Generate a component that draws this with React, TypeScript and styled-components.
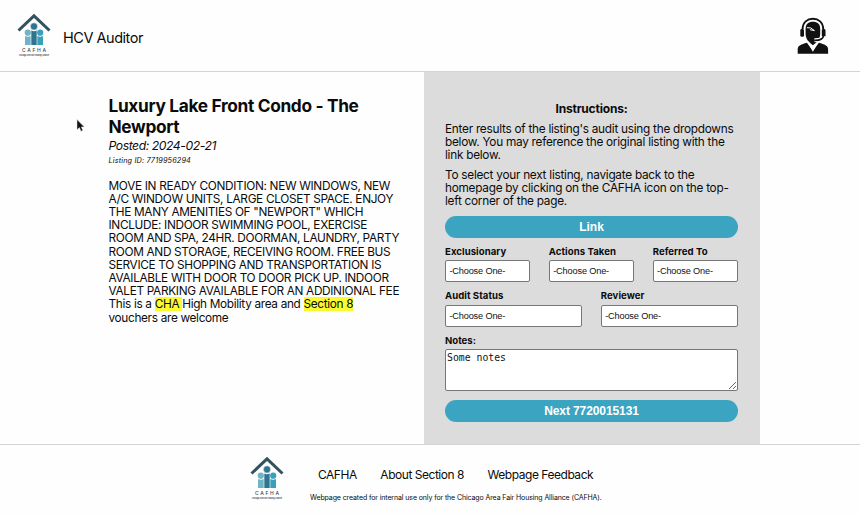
import React from "react";
import styled, { createGlobalStyle } from "styled-components";

const GlobalStyle = createGlobalStyle`
  * { box-sizing: border-box; }
  body { margin: 0; background: #fefefe; color: #0b0b0b; font-family: Inter, "Liberation Sans", sans-serif; }
  p, h1, h2, h3 { margin: 0; }
`;

const Page = styled.div`
  display: flex;
  flex-direction: column;
  height: 515px;
  width: 860px;
  overflow: hidden;
`;

const Header = styled.header`
  display: flex;
  align-items: flex-start;
  justify-content: space-between;
  height: 72.4px;
  padding: 13px 30px 0 17px;
  border-bottom: 1px solid #d4d4d4;
`;

const Brand = styled.div`
  display: flex;
  gap: 12px;
`;

const BrandName = styled.span`
  font-size: 14.5px;
  line-height: 20px;
  margin-top: 15px;
  letter-spacing: -0.48px;
`;

const AgentSvg = styled.svg`
  display: block;
  margin-top: 4px;
`;

const LogoSvg = styled.svg`
  display: block;
  flex: none;
  overflow: visible;
`;

const Main = styled.main`
  display: flex;
  height: 371.6px;
  padding-left: 108.5px;
`;

const Listing = styled.article`
  width: 315px;
  padding-top: 22.8px;
  white-space: nowrap;
`;

const Title = styled.h1`
  font-size: 17.3px;
  line-height: 21px;
  font-weight: 700;
  letter-spacing: -0.33px;
`;

const Posted = styled.p`
  font-size: 12.2px;
  font-style: italic;
  line-height: 16px;
  margin-top: 1px;
  letter-spacing: -0.44px;
`;

const ListingId = styled.p`
  font-size: 7.3px;
  font-style: italic;
  line-height: 10px;
  margin-top: 2px;
  letter-spacing: 0.15px;
`;

const Description = styled.p`
  font-size: 11.8px;
  line-height: 13.2px;
  margin-top: 13.4px;
  letter-spacing: -0.32px;
`;

const Mark = styled.mark`
  background: #fafa32;
  color: inherit;
`;

const Pointer = styled.svg`
  position: absolute;
  left: 75px;
  top: 118px;
`;

const Panel = styled.section`
  width: 336.5px;
  background: #dcdcdc;
  padding: 28.6px 22px 0 21.5px;
`;

const PanelTitle = styled.h2`
  font-size: 12px;
  line-height: 15px;
  text-align: center;
  letter-spacing: -0.2px;
`;

const Instruction = styled.p`
  font-size: 11.8px;
  line-height: 13.2px;
  margin-top: 6.7px;
  white-space: nowrap;
  letter-spacing: -0.26px;
`;

const PillButton = styled.button`
  display: block;
  width: 100%;
  height: 22px;
  padding: 0;
  border: 0;
  border-radius: 11px;
  background: #3ba4c1;
  color: #fff;
  font: 700 12px/22px "Liberation Sans", Arial, sans-serif;
  letter-spacing: -0.1px;
`;

const LinkButton = styled(PillButton)`
  margin-top: 7px;
  letter-spacing: 0;
`;

const Fields = styled.div<{ $top: number }>`
  display: flex;
  gap: 18.5px;
  margin-top: ${(p) => p.$top}px;
`;

const Field = styled.label`
  flex: 1;
  font-size: 9.6px;
  line-height: 12px;
  font-weight: 700;
  letter-spacing: 0.05px;
`;

const Select = styled.select`
  display: block;
  appearance: none;
  width: 100%;
  height: 22px;
  margin-top: 2.5px;
  padding: 0 3.4px;
  border: 1px solid #777;
  border-radius: 2px;
  background: #fff;
  color: #111;
  font: 9.2px "Liberation Sans", Arial, sans-serif;
  letter-spacing: -0.16px;
`;

const NotesField = styled.label`
  display: block;
  margin-top: 8px;
  font-size: 9.6px;
  line-height: 12px;
  font-weight: 700;
`;

const Notes = styled.textarea`
  display: block;
  width: 100%;
  height: 41.5px;
  margin: 2.5px 0 9px;
  padding: 1px;
  border: 1px solid #777;
  border-radius: 2px;
  background: #fff;
  color: #111;
  font: 9.8px/13px "DejaVu Sans Mono", monospace;
`;

const Footer = styled.footer`
  display: flex;
  gap: 26px;
  height: 71px;
  padding: 11px 0 0 250px;
  border-top: 1px solid #d4d4d4;
`;

const FooterBody = styled.div`
  padding-top: 10px;
`;

const FooterNav = styled.nav`
  display: flex;
  gap: 23.6px;
  padding-left: 8px;
  font-size: 12px;
  line-height: 18px;
  white-space: nowrap;
  letter-spacing: -0.47px;
`;

const Credit = styled.p`
  margin-top: 9px;
  font-size: 7px;
  line-height: 9px;
  white-space: nowrap;
  letter-spacing: -0.11px;
`;

function Logo() {
  return (
    <LogoSvg width="34" height="45" viewBox="0 0 34 45">
      <path d="M1.500 17.500 17 2.800 32.500 17.500" fill="none" stroke="#31535f" strokeWidth="3" />
      <g fill="#6fb3c6">
        <circle cx="10.800" cy="19.700" r="3.100" />
        <path d="M8 23q2.800 1.400 5.700 0V32H8z" />
      </g>
      <g fill="#39a0bb">
        <circle cx="23.200" cy="19.700" r="3.100" />
        <path d="M20.300 23q2.900 1.400 5.700 0V32h-5.700z" />
      </g>
      <path d="M14.300 17.500q2.700 1.500 5.400 0V32h-5.400z" fill="#2f7590" />
      <circle cx="17" cy="13.400" r="3.600" fill="#2f7590" stroke="#fefefe" strokeWidth=".5" />
      <text x="5" y="39" textLength="24" fontSize="5" fontWeight="500" fill="#3c4a50" fontFamily="Inter, sans-serif">CAFHA</text>
      <text x="2" y="42.500" textLength="30" lengthAdjust="spacingAndGlyphs" fontSize="2.200" fontWeight="600" fill="#333" fontFamily="Inter, sans-serif">Chicago Area Fair Housing Alliance</text>
    </LogoSvg>
  );
}

function AgentIcon() {
  return (
    <AgentSvg width="34" height="38" viewBox="0 0 34 38">
      <g transform="translate(.4 -.3)">
        <path d="M6.200 12.500C6.200 5.500 11 2 16.500 2S26.800 5.500 26.800 12.500" fill="none" stroke="#111" strokeWidth="1.900" />
        <rect x="3.900" y="12.300" width="3.700" height="7.800" rx="1.400" fill="#111" />
        <rect x="25.400" y="12.300" width="3.700" height="7.800" rx="1.400" fill="#111" />
        <path d="M9.200 12C9.200 7.500 12 5 16.500 5S23.800 7.500 23.800 12V17C23.800 22 20.500 26.500 16.500 26.500S9.200 22 9.200 17z" fill="#111" />
        <path d="M10.500 11 14.200 11.200 18 13.900 13.500 13" fill="none" stroke="#fff" strokeWidth="1" />
        <path d="M26.600 19.500C26.300 23.500 23 23.600 18 23.600" fill="none" stroke="#fff" strokeWidth="4" />
        <path d="M27 19.500C26.500 23 23.500 23.700 18.500 23.700" fill="none" stroke="#111" strokeWidth="1.700" strokeLinecap="round" />
        <path d="M1.300 37V32.500C1.300 28.500 5 27.700 10.500 26L16.500 34 22.500 26C28 27.700 31.700 28.500 31.700 32.500V37z" fill="#111" />
        <path d="M11.500 26.300 16.500 29.300 21.500 26.300 16.500 35z" fill="#fff" />
        <path d="M12.800 25.500h7.400l-3.700 3z" fill="#111" />
      </g>
    </AgentSvg>
  );
}

function Choice({ label }: { label: string }) {
  return (
    <Field>
      {label}
      <Select>
        <option>-Choose One-</option>
      </Select>
    </Field>
  );
}

export default function App() {
  return (
    <Page>
      <GlobalStyle />
      <Header>
        <Brand>
          <Logo />
          <BrandName>HCV Auditor</BrandName>
        </Brand>
        <AgentIcon />
      </Header>
      <Main>
        <Listing>
          <Title>Luxury Lake Front Condo - The<br />Newport</Title>
          <Posted>Posted: 2024-02-21</Posted>
          <ListingId>Listing ID: 7719956294</ListingId>
          <Description>
            MOVE IN READY CONDITION: NEW WINDOWS, NEW<br />
            A/C WINDOW UNITS, LARGE CLOSET SPACE. ENJOY<br />
            THE MANY AMENITIES OF "NEWPORT" WHICH<br />
            INCLUDE: INDOOR SWIMMING POOL, EXERCISE<br />
            ROOM AND SPA, 24HR. DOORMAN, LAUNDRY, PARTY<br />
            ROOM AND STORAGE, RECEIVING ROOM. FREE BUS<br />
            SERVICE TO SHOPPING AND TRANSPORTATION IS<br />
            AVAILABLE WITH DOOR TO DOOR PICK UP. INDOOR<br />
            VALET PARKING AVAILABLE FOR AN ADDINIONAL FEE<br />
            This is a <Mark>CHA </Mark>High Mobility area and <Mark>Section 8</Mark><br />
            vouchers are welcome
          </Description>
        </Listing>
        <Panel>
          <PanelTitle>Instructions:</PanelTitle>
          <Instruction>
            Enter results of the listing's audit using the dropdowns<br />
            below. You may reference the original listing with the<br />
            link below.
          </Instruction>
          <Instruction>
            To select your next listing, navigate back to the<br />
            homepage by clicking on the CAFHA icon on the top-<br />
            left corner of the page.
          </Instruction>
          <LinkButton>Link</LinkButton>
          <Fields $top={8}>
            <Choice label="Exclusionary" />
            <Choice label="Actions Taken" />
            <Choice label="Referred To" />
          </Fields>
          <Fields $top={8}>
            <Choice label="Audit Status" />
            <Choice label="Reviewer" />
          </Fields>
          <NotesField>
            Notes:
            <Notes defaultValue="Some notes" />
          </NotesField>
          <PillButton>Next 7720015131</PillButton>
        </Panel>
      </Main>
      <Footer>
        <Logo />
        <FooterBody>
          <FooterNav>
            <span>CAFHA</span>
            <span>About Section 8</span>
            <span>Webpage Feedback</span>
          </FooterNav>
          <Credit>Webpage created for internal use only for the Chicago Area Fair Housing Alliance (CAFHA).</Credit>
        </FooterBody>
      </Footer>
      <Pointer width="12" height="16" viewBox="0 0 12 16">
        <path d="M2 1.500V11.700L4.400 9.600 6 13.200 7.800 12.400 6.300 8.900H9.300z" fill="#111" stroke="#ddd" strokeWidth=".5" />
      </Pointer>
    </Page>
  );
}
